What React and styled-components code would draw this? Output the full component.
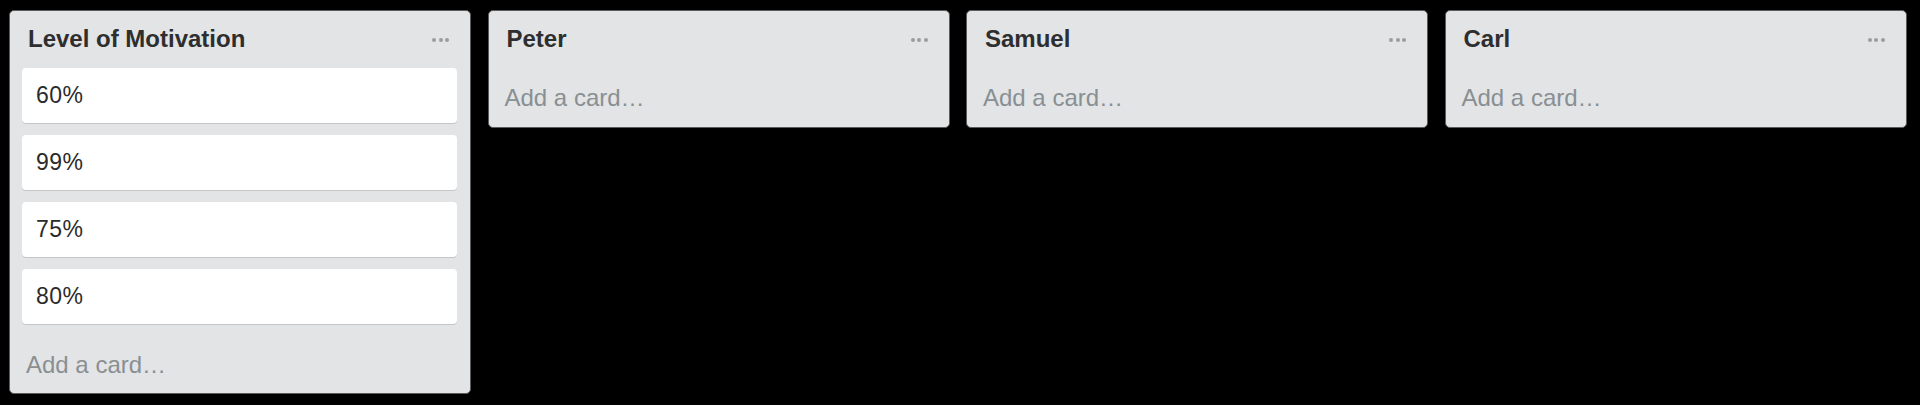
import React from "react";
import styled, { createGlobalStyle } from "styled-components";

const GlobalStyle = createGlobalStyle`
  html, body {
    margin: 0;
    padding: 0;
    background: #000;
  }
  * { box-sizing: border-box; }
`;

const Board = styled.div`
  display: flex;
  align-items: flex-start;
  gap: 16.5px;
  padding: 10px 9px;
  min-height: 405px;
  background: #000;
  font-family: "Liberation Sans", Arial, Helvetica, sans-serif;
`;

const List = styled.div`
  width: 462px;
  flex: 0 0 462px;
  background: #e2e4e6;
  border: 1px solid #5a5b5c;
  border-radius: 5px;
  padding: 0 0 ${(p) => (p.$empty ? "15px" : "14px")};
  display: flex;
  flex-direction: column;
`;

const Header = styled.div`
  display: flex;
  align-items: center;
  justify-content: space-between;
  padding: 14px 21px 15px 18px;
`;

const Title = styled.h2`
  margin: 0;
  font-size: 24px;
  line-height: 28px;
  font-weight: 700;
  color: #2e2e2e;
`;

const Menu = styled.div`
  display: flex;
  gap: 2.5px;
  margin-top: 1px;
`;

const Dot = styled.span`
  width: 4px;
  height: 4px;
  border-radius: 50%;
  background: #9a9c9e;
`;

const Cards = styled.div`
  display: flex;
  flex-direction: column;
  gap: 12px;
  padding: 0 13px 0 12px;
  margin-bottom: 12px;
`;

const Card = styled.div`
  background: #fff;
  border-radius: 4px;
  box-shadow: 0 1px 0 #c4c6c8;
  padding: 14px 14px;
  height: 55px;
  font-size: 23px;
  line-height: 27px;
  letter-spacing: 0.5px;
  color: #2b2b2b;
`;

const AddCard = styled.div`
  padding: ${(p) => (p.$empty ? "16px" : "15px")} 16px 0;
  font-size: 24px;
  line-height: 28px;
  color: #898f92;
`;

const lists = [
  { title: "Level of Motivation", cards: ["60%", "99%", "75%", "80%"] },
  { title: "Peter", cards: [] },
  { title: "Samuel", cards: [] },
  { title: "Carl", cards: [] },
];

export default function App() {
  return (
    <>
      <GlobalStyle />
      <Board>
        {lists.map((list) => {
          const empty = list.cards.length === 0;
          return (
            <List key={list.title} $empty={empty}>
              <Header>
                <Title>{list.title}</Title>
                <Menu>
                  <Dot />
                  <Dot />
                  <Dot />
                </Menu>
              </Header>
              {!empty && (
                <Cards>
                  {list.cards.map((c) => (
                    <Card key={c}>{c}</Card>
                  ))}
                </Cards>
              )}
              <AddCard $empty={empty}>Add a card…</AddCard>
            </List>
          );
        })}
      </Board>
    </>
  );
}
